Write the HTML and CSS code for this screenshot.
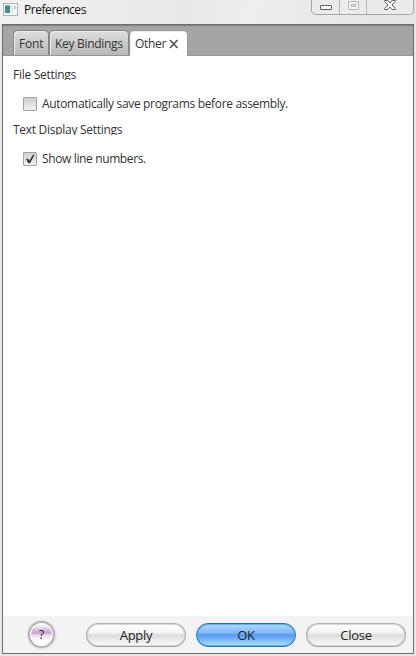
FILE: index.html
```html
<!DOCTYPE html>
<html lang="en">
<head>
<meta charset="utf-8">
<title>Preferences</title>
<link rel="stylesheet" href="styles.css">
</head>
<body>
<div class="window">
  <header class="titlebar">
    <svg class="app-icon" width="15" height="13" viewBox="0 0 15 13">
      <rect x=".5" y=".5" width="14" height="12" fill="#f4f7f7" stroke="#a9b5b8"/>
      <rect x="2" y="3" width="5" height="7" fill="#438f8c"/>
      <rect x="2" y="2" width="5" height="1" fill="#85b5b2"/>
      <rect x="8" y="2" width="2" height="9" fill="#dcebed"/>
      <rect x="11" y="3" width="2" height="3" fill="#bfd0d2"/>
    </svg>
    <span class="title">Preferences</span>
    <div class="controls">
      <span class="control min"><svg width="12" height="5"><rect x=".5" y=".5" width="11" height="4" rx=".5" fill="#fff" stroke="#565a68"/></svg></span>
      <span class="control max"><svg width="11" height="9"><rect x=".5" y=".5" width="10" height="8" rx=".5" fill="#f4f4f4" stroke="#b5b5b5"/><rect x="3.5" y="3.5" width="4" height="2" fill="#eee" stroke="#b5b5b5"/></svg></span>
      <span class="control close"><svg width="12" height="10" viewBox="0 0 12 10"><path d="M.7.5h3L6 2.900 8.300.5h3v1L8 5l3.300 3.500v1h-3L6 7.100 3.700 9.500h-3v-1L4 5 .7 1.500z" fill="#fff" stroke="#565a68"/></svg></span>
    </div>
  </header>
  <main class="client">
    <nav class="tabs">
      <div class="tab font-tab"><span>Font</span></div>
      <div class="tab keys-tab"><span>Key Bindings</span></div>
      <div class="tab active"><span>Other</span><svg width="10" height="10" viewBox="0 0 10 10"><path d="M1 1l7.500 8M8.500 1L1 9" stroke="#555" stroke-width="1.700"/></svg></div>
    </nav>
    <section class="content">
      <h2 class="heading file">File Settings</h2>
      <label class="option"><span class="box"></span><span class="auto-text">Automatically save programs before assembly.</span></label>
      <h2 class="heading display">Text Display Settings</h2>
      <label class="option"><span class="box"><svg width="14" height="14" viewBox="0 0 14 14"><path d="M3 7l2.200-.2 1.100 2L10 2.700l1.500.2L7 11.200H5.400z" fill="#333"/></svg></span><span class="lines-text">Show line numbers.</span></label>
    </section>
    <footer class="actions">
      <button class="help">?</button>
      <button class="button apply">Apply</button>
      <button class="button ok">OK</button>
      <button class="button">Close</button>
    </footer>
  </main>
</div>
</body>
</html>
```
FILE: styles.css
```css
* { box-sizing: border-box; }
body {
  margin: 0;
  font: 12px/16px "Open Sans", "Noto Sans", sans-serif;
  color: #333;
}
.window {
  width: 416px;
  height: 656px;
  padding: 0 2px 2px;
  background: #e7e7e7;
  overflow: hidden;
  display: flex;
  flex-direction: column;
}
.titlebar {
  height: 24px;
  flex: none;
  margin: 0 -2px;
  padding-left: 3px;
  display: flex;
  align-items: flex-start;
  background: linear-gradient(100deg, #f1f1f1, #e9e9e9 45%, #eee 60%, #e5e5e5);
}
.app-icon { margin-top: 3px; }
.title { margin: 2px 0 0 6px; color: #111; letter-spacing: -.45px; }
.controls {
  margin-left: auto;
  margin-right: 2px;
  width: 103px;
  height: 15px;
  display: flex;
  border: 1px solid #a5a5a5;
  border-top: 0;
  border-radius: 0 0 5px 5px;
  background: #ebebeb;
}
.control { display: flex; justify-content: center; align-items: flex-start; }
.min { width: 28px; border-right: 1px solid #b5b5b5; padding-top: 5px; }
.max { width: 27px; border-right: 1px solid #b5b5b5; padding-top: 1px; }
.close { flex: 1; }
.client {
  flex: 1;
  width: 412px;
  display: flex;
  flex-direction: column;
  border: 1px solid #6d6d6d;
  background: #fff;
}
.tabs {
  height: 31px;
  flex: none;
  display: flex;
  align-items: flex-end;
  padding-left: 10px;
  background: #a5a5a5;
  border-bottom: 1px solid #969696;
  box-shadow: inset 0 1px 1px #808080;
}
.tab {
  height: 25px;
  padding: 5px 0 0 5px;
  display: flex;
  border: 1px solid #858585;
  border-bottom: 0;
  border-radius: 5px 5px 0 0;
  background: linear-gradient(#dedede, #b8b8b8);
  box-shadow: inset 1px 1px #eee;
  white-space: nowrap;
}
.font-tab { width: 36px; letter-spacing: -.15px; }
.keys-tab { width: 80px; letter-spacing: -.3px; }
.active {
  width: 59px;
  height: 26px;
  margin-bottom: -1px;
  border-color: #9a9a9a;
  background: #fff;
  letter-spacing: -.3px;
}
.active svg { margin: 3px 0 0 3px; }
.content { flex: 1; }
.heading {
  margin: 0 0 0 10px;
  height: 13px;
  overflow: hidden;
  font-size: 12px;
  line-height: 16px;
  font-weight: 400;
  letter-spacing: -.28px;
  white-space: nowrap;
}
.file { margin-top: 11px; }
.display { margin-top: 10px; }
.option { display: flex; margin: 16px 0 0 20px; height: 16px; }
.option > span:last-child { margin-left: 5px; white-space: nowrap; }
.auto-text { letter-spacing: -.33px; }
.lines-text { letter-spacing: -.37px; }
.box {
  width: 14px;
  height: 14px;
  margin-top: 1px;
  border: 1px solid #a2a2a2;
  border-radius: 1px;
  background: linear-gradient(#d0d0d0, #f0f0f0);
}
.box svg { display: block; margin: -1px; }
.actions {
  height: 37px;
  flex: none;
  display: flex;
  align-items: center;
  padding-left: 25px;
  background: #f3f3f3;
}
.button {
  width: 100px;
  height: 24px;
  flex: none;
  margin-right: 10px;
  padding: 0;
  border: 1px solid;
  border-color: #b2b2b2 #aaa #a0a0a0;
  border-radius: 12px;
  background: linear-gradient(#fff, #f3f3f3 40%, #ddd 50%, #eee 80%, #fff);
  box-shadow: inset 0 0 0 1px #d6d6d6;
  font: 13px/18px "Open Sans", sans-serif;
  letter-spacing: -.3px;
  color: #222;
}
.button:last-child { margin-right: 0; }
.ok {
  border-color: #1675b5;
  background: linear-gradient(#b5d9fc, #81b8f8 40%, #5298ee 50%, #8dc4fb 80%, #b6e2ff);
  box-shadow: inset 0 0 0 1px #5eb4ee;
}
.help {
  width: 27px;
  height: 27px;
  flex: none;
  margin: -1px 31px 0 0;
  padding: 2px 0 0;
  border: 2px solid #b4b4b4;
  border-radius: 50%;
  background: linear-gradient(#fff 5%, #cf9ed0 43%, #edd9ef 53%, #fff 75%);
  box-shadow: inset 0 0 0 1px #fff, 0 0 2px #aaa;
  font: 12px/16px "Open Sans", sans-serif;
  color: #222;
}
```
